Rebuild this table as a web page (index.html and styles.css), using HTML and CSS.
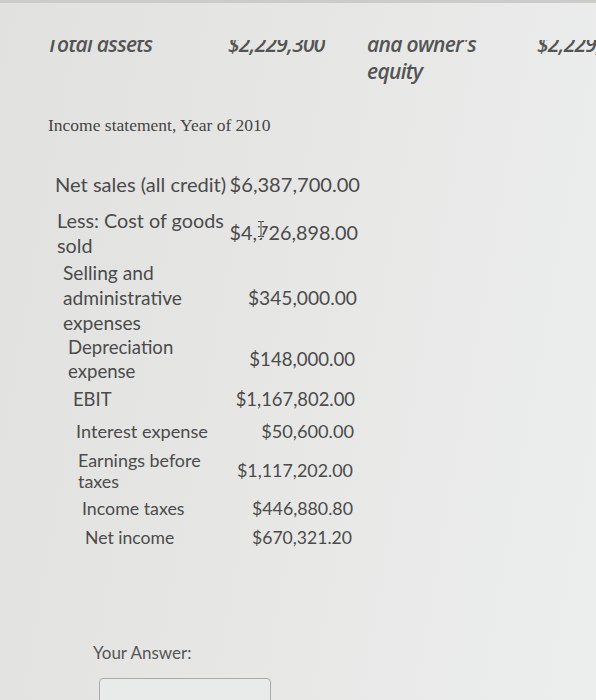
FILE: index.html
```html
<!DOCTYPE html>
<html>
<head>
<meta charset="utf-8">
<link rel="stylesheet" href="styles.css">
</head>
<body>
<div class="page">
  <div class="bs-clip">
    <div class="bs-line">
      <span class="c1">Total assets</span>
      <span class="c2">$2,229,300</span>
      <span class="c3">and owner's</span>
      <span class="c4">$2,229,300</span>
    </div>
  </div>
  <div class="bs-line2">
    <span class="c1"></span>
    <span class="c2"></span>
    <span class="c3">equity</span>
  </div>

  <p class="title">Income statement, Year of 2010</p>

  <div class="stmt">
    <div class="row r1"><div class="lbl">Net sales (all credit)</div><div class="val">$6,387,700.00</div></div>
    <div class="row r2"><div class="lbl">Less: Cost of goods sold</div><div class="val cur">$4,726,898.00<svg class="ibeam" width="10" height="18" viewBox="0 0 10 18"><path d="M2 1.5h2.2c.5 0 .8.4.8.8 0-.4.3-.8.8-.8H8M2 16.5h2.2c.5 0 .8-.4.8-.8 0 .4.3.8.8.8H8M5 2.3v13.4" fill="none" stroke="#f4f4f4" stroke-width="2.6"/><path d="M2 1.5h2.2c.5 0 .8.4.8.8 0-.4.3-.8.8-.8H8M2 16.5h2.2c.5 0 .8-.4.8-.8 0 .4.3.8.8.8H8M5 2.3v13.4" fill="none" stroke="#3a3a3a" stroke-width="1"/></svg></div></div>
    <div class="row r3"><div class="lbl">Selling and administrative expenses</div><div class="val">$345,000.00</div></div>
    <div class="row r4"><div class="lbl">Depreciation expense</div><div class="val">$148,000.00</div></div>
    <div class="row r5"><div class="lbl">EBIT</div><div class="val">$1,167,802.00</div></div>
    <div class="row r6"><div class="lbl">Interest expense</div><div class="val">$50,600.00</div></div>
    <div class="row r7"><div class="lbl">Earnings before taxes</div><div class="val">$1,117,202.00</div></div>
    <div class="row r8"><div class="lbl">Income taxes</div><div class="val">$446,880.80</div></div>
    <div class="row r9"><div class="lbl">Net income</div><div class="val">$670,321.20</div></div>
  </div>

  <div class="answer">
    <div class="answer-label">Your Answer:</div>
    <div class="answer-box"></div>
  </div>
</div>
</body>
</html>
```
FILE: styles.css
```css
html, body {
  margin: 0;
  padding: 0;
}
body {
  width: 596px;
  height: 700px;
  overflow: hidden;
  background: linear-gradient(100deg, #e1e2e0 0%, #e6e7e5 45%, #eceeed 100%);
}
.page {
  border-top: 3px solid #cbccca;
  height: 697px;
  color: #4a4a4a;
}

/* balance sheet tail (top of first line cut off by the viewport) */
.bs-clip {
  margin-top: 37px;
  height: 17px;
  overflow: hidden;
}
.bs-line, .bs-line2 {
  display: grid;
  grid-template-columns: 181px 139px 170px 1fr;
  padding-left: 47px;
  font-family: "Open Sans", sans-serif;
  font-style: italic;
  font-weight: 600;
  font-size: 21px;
  line-height: 21px;
  letter-spacing: -0.7px;
  color: #545454;
  white-space: nowrap;
}
.bs-line {
  margin-top: -6.5px;
}
.bs-line2 {
  margin-top: 3.5px;
}

.title {
  margin: 33px 0 0 48px;
  font-family: "Liberation Serif", "Times New Roman", serif;
  font-size: 17.5px;
  line-height: 20px;
  color: #444;
}

/* income statement */
.stmt {
  margin-top: 37px;
  font-family: Lato, sans-serif;
  color: #4b4b4b;
}
.row {
  display: grid;
  align-items: center;
}
.val {
  justify-self: end;
  white-space: nowrap;
}
.cur {
  position: relative;
}
.ibeam {
  position: absolute;
  left: 26px;
  top: 0;
}
.r1 { margin-left: 55px; width: 305px; grid-template-columns: 174px 1fr; font-size: 20.1px; line-height: 25px; }
.r2 { margin-left: 57px; width: 301px; grid-template-columns: 172px 1fr; font-size: 19.8px; line-height: 25px; margin-top: 11px; }
.r3 { margin-left: 63px; width: 294px; grid-template-columns: 160px 1fr; font-size: 19.2px; line-height: 25px; margin-top: 2px; }
.r4 { margin-left: 68px; width: 287px; grid-template-columns: 150px 1fr; font-size: 18.6px; line-height: 24px; margin-top: 0; }
.r5 { margin-left: 73px; width: 282px; grid-template-columns: 150px 1fr; font-size: 18.4px; line-height: 24px; margin-top: 4px; }
.r6 { margin-left: 76px; width: 278px; grid-template-columns: 150px 1fr; font-size: 18.2px; line-height: 24px; margin-top: 8px; }
.r7 { margin-left: 78px; width: 275px; grid-template-columns: 150px 1fr; font-size: 17.9px; line-height: 21px; margin-top: 7px; }
.r8 { margin-left: 82px; width: 271px; grid-template-columns: 150px 1fr; font-size: 17.8px; line-height: 22px; margin-top: 5px; }
.r9 { margin-left: 85px; width: 267px; grid-template-columns: 150px 1fr; font-size: 17.6px; line-height: 22px; margin-top: 8px; }

/* answer */
.answer {
  margin: 94px 0 0 93px;
  font-family: Lato, sans-serif;
}
.answer-label {
  font-size: 17px;
  line-height: 20px;
  color: #555;
}
.answer-box {
  margin: 15px 0 0 6px;
  width: 170px;
  height: 32px;
  border: 1px solid #a9abaa;
  border-radius: 4px;
  background: #e9ebea;
}
```
